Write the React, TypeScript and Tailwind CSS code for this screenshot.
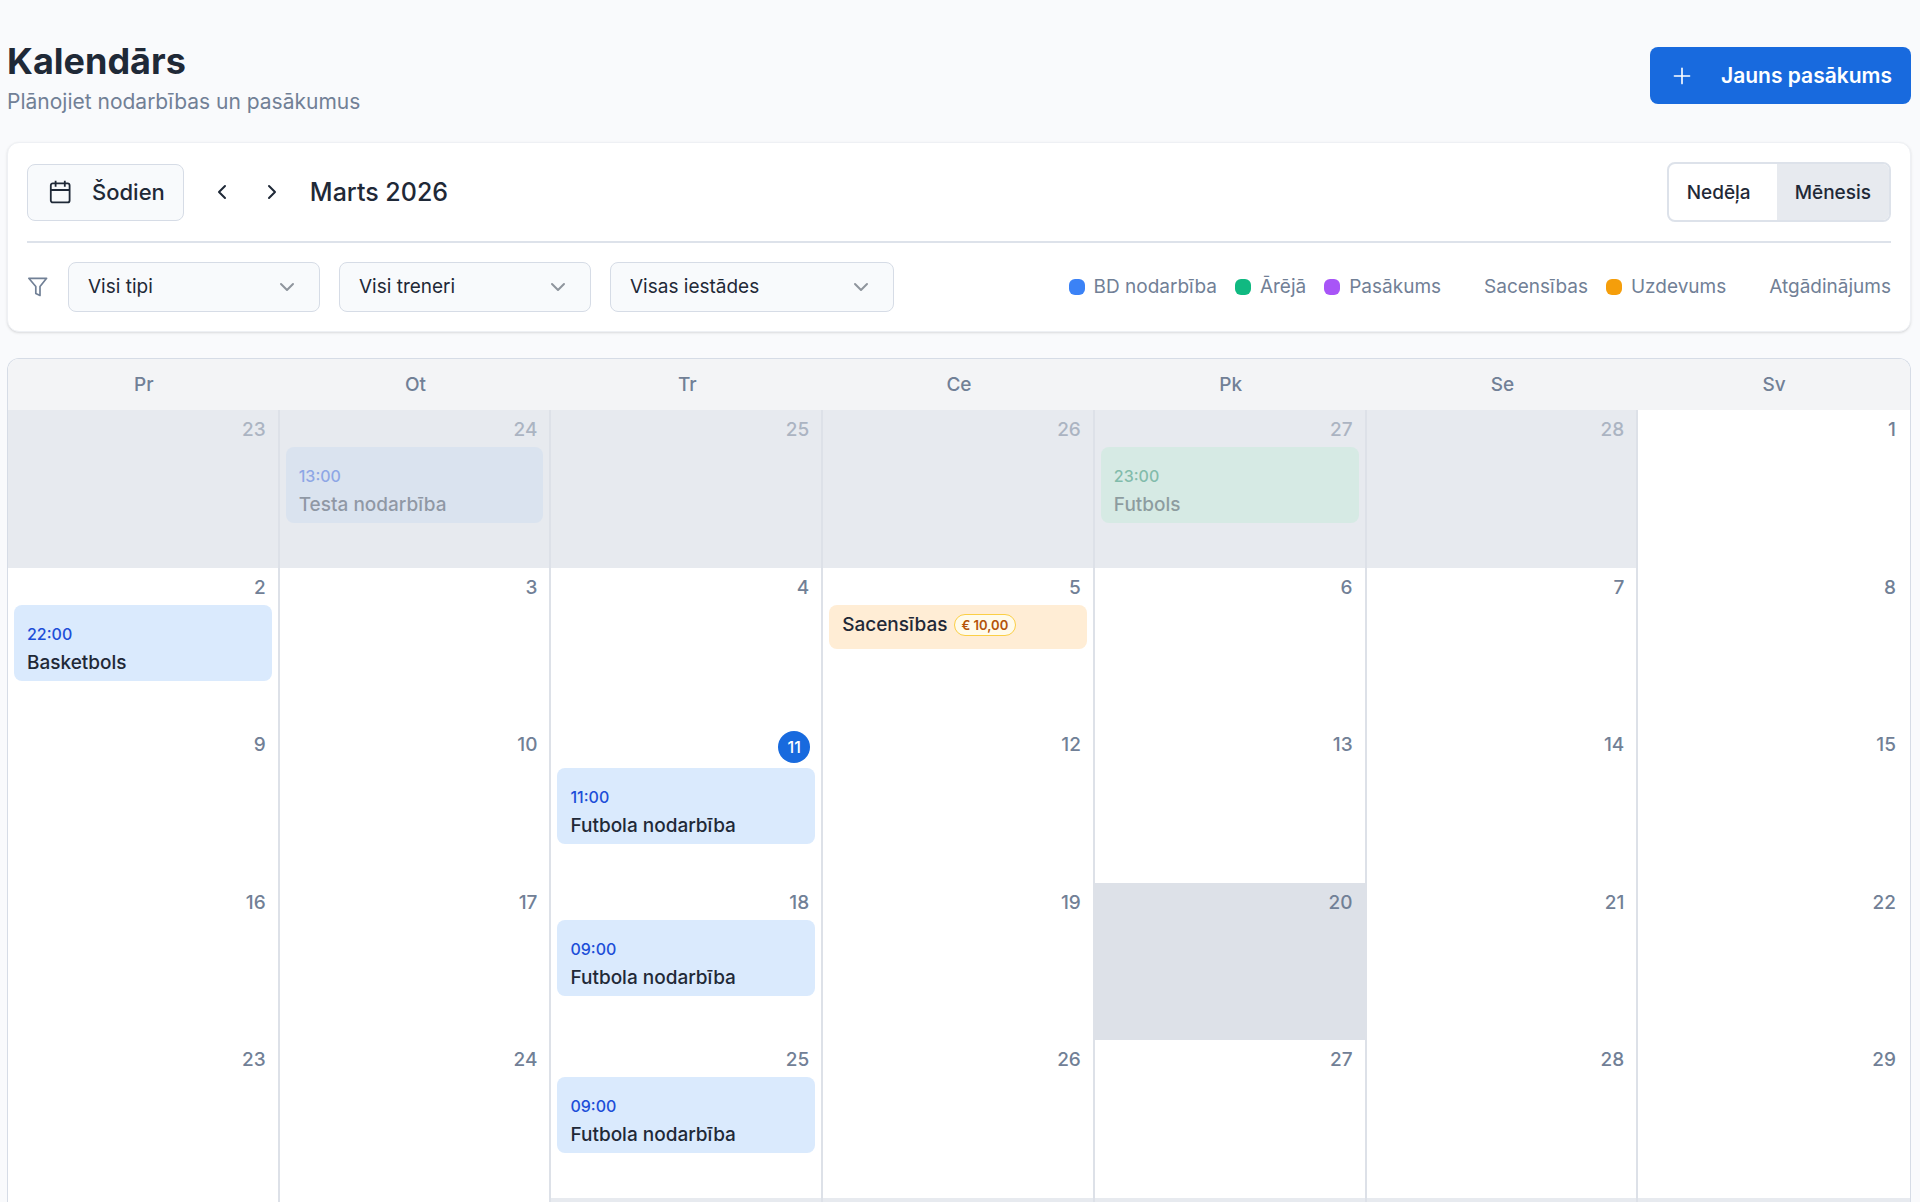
import { useState } from "react";
import clsx from "clsx";
import { ChevronDown, ChevronLeft, ChevronRight, Plus } from "lucide-react";

type CalendarEvent = {
  title: string;
  time?: string;
  price?: string;
  color: "blue" | "green" | "orange";
};

type Day = {
  id: string;
  day: number;
  outside?: boolean;
  today?: boolean;
  selected?: boolean;
  event?: CalendarEvent;
};

const weekdays = ["Pr", "Ot", "Tr", "Ce", "Pk", "Se", "Sv"];

const legend = [
  { label: "BD nodarbība", dot: "bg-[#3b82f6]" },
  { label: "Ārējā", dot: "bg-[#10b981]" },
  { label: "Pasākums", dot: "bg-[#a855f7]" },
  { label: "Sacensības", dot: "" },
  { label: "Uzdevums", dot: "bg-[#f59e0b]" },
  { label: "Atgādinājums", dot: "" },
];

const events: Record<string, CalendarEvent> = {
  "2-24": { time: "13:00", title: "Testa nodarbība", color: "blue" },
  "2-27": { time: "23:00", title: "Futbols", color: "green" },
  "3-2": { time: "22:00", title: "Basketbols", color: "blue" },
  "3-5": { title: "Sacensības", price: "€ 10,00", color: "orange" },
  "3-11": { time: "11:00", title: "Futbola nodarbība", color: "blue" },
  "3-18": { time: "09:00", title: "Futbola nodarbība", color: "blue" },
  "3-25": { time: "09:00", title: "Futbola nodarbība", color: "blue" },
};

// The grid starts on Monday, February 23
const days: Day[] = Array.from({ length: 42 }, (_, i) => {
  const date = new Date(2026, 1, 23 + i);
  const month = date.getMonth() + 1;
  const id = `${month}-${date.getDate()}`;
  return {
    id,
    day: date.getDate(),
    outside: month !== 3,
    today: id === "3-11",
    selected: id === "3-20",
    event: events[id],
  };
});

const eventStyles = {
  blue: { box: "bg-[#daeafd]", faded: "bg-[#dae3ef]", time: "text-[#1d4ed8]" },
  green: { box: "bg-[#d1fae5]", faded: "bg-[#d6eae4]", time: "text-[#047857]" },
  orange: { box: "bg-[#ffedd5]", faded: "bg-[#f3ebe2]", time: "text-[#c2410c]" },
};

const CalendarIcon = () => (
  <svg
    width="24"
    height="24"
    viewBox="0 0 24 24"
    fill="none"
    stroke="currentColor"
    strokeWidth="1.8"
    strokeLinejoin="round"
    aria-hidden="true"
  >
    <rect x="2.8" y="3.4" width="18.8" height="19" rx="2" />
    <path d="M2.8 10h18.8M7.6 .8v6M16.8 .8v6" />
  </svg>
);

const FilterIcon = () => (
  <svg
    width="22"
    height="22"
    viewBox="0 0 22 22"
    fill="none"
    stroke="currentColor"
    strokeWidth="1.7"
    strokeLinejoin="round"
    className="shrink-0 text-[#718096]"
    aria-hidden="true"
  >
    <path d="M1.8 2.3h17.8l-6.6 8.2v8.9l-4.2-2v-6.9z" />
  </svg>
);

const FilterSelect = ({
  label,
  value,
  className,
}: {
  label: string;
  value: string;
  className: string;
}) => (
  <div className={clsx("relative", className)}>
    <select
      aria-label={label}
      className="block h-[50px] w-full appearance-none rounded-lg border border-[#d6dce6] bg-[#f8fafc] pl-[19px] pr-12 text-[19px]"
    >
      <option>{value}</option>
    </select>
    <ChevronDown
      size={24}
      className="pointer-events-none absolute right-[21px] top-[13px] text-[#8f959d]"
    />
  </div>
);

const EventCard = ({
  event,
  faded,
}: {
  event: CalendarEvent;
  faded?: boolean;
}) => {
  const style = eventStyles[event.color];
  return (
    <button
      className={clsx(
        "mt-[3px] block w-full rounded-lg px-[13px] text-left",
        faded ? style.faded : style.box,
        event.time ? "pb-1 pt-[18px]" : "pb-2.5 pt-1.5"
      )}
    >
      {event.time && (
        <span
          className={clsx(
            "mb-1 block text-[16px] font-medium leading-[22px]",
            style.time,
            faded && "opacity-40"
          )}
        >
          {event.time}
        </span>
      )}
      <span
        className={clsx(
          "flex items-center gap-1.5 text-[19px] font-medium leading-7",
          faded && "opacity-40"
        )}
      >
        {event.title}
        {event.price && (
          <span className="rounded-full border border-[#fbcf45] bg-[#fffbeb] px-[7px] text-[13px] font-semibold leading-5 text-[#b45309]">
            {event.price}
          </span>
        )}
      </span>
    </button>
  );
};

const DayCell = ({
  day,
  last,
  collapsed,
}: {
  day: Day;
  last: boolean;
  collapsed: boolean;
}) => (
  <div
    className={clsx(
      "min-w-0 border-r-2",
      !collapsed && "px-1.5 pt-1.5",
      last ? "border-transparent" : "border-[#dde1e8]",
      day.outside && "bg-[#e7eaef]",
      day.selected && "bg-[#dde1e8]"
    )}
  >
    {!collapsed && (
      <>
        <div className="flex justify-end pr-[5px]">
          {day.today ? (
            <span className="mb-0.5 flex size-8 items-center justify-center rounded-full bg-[#186ade] text-[16px] font-medium text-white">
              {day.day}
            </span>
          ) : (
            <span
              className={clsx(
                "pr-px text-[19px] font-medium leading-7 text-[#718096]",
                day.outside && "opacity-50"
              )}
            >
              {day.day}
            </span>
          )}
        </div>
        {day.event && <EventCard event={day.event} faded={day.outside} />}
      </>
    )}
  </div>
);

export default function App() {
  const [view, setView] = useState("month");

  return (
    <main className="flex min-h-screen flex-col bg-[#f9fafc] pl-[7px] pr-[9px] pt-10 font-[Inter,sans-serif] text-[#1f2937]">
      <header className="flex items-start justify-between">
        <div>
          <h1 className="text-[36px] font-bold leading-[42px]">Kalendārs</h1>
          <p className="mt-1 text-[21px] leading-8 text-[#718096]">
            Plānojiet nodarbības un pasākumus
          </p>
        </div>
        <button className="mt-[7px] flex h-[57px] items-center gap-[26px] rounded-lg bg-[#186ade] px-[19px] text-[21px] font-semibold text-white">
          <Plus size={26} strokeWidth={1.5} />
          Jauns pasākums
        </button>
      </header>

      <section className="mt-6 rounded-xl border border-[#eef0f4] bg-white px-[19px] shadow-sm">
        <div className="flex h-[100px] items-center justify-between border-b-2 border-[#dde2ea]">
          <div className="flex items-center">
            <button className="flex h-[57px] items-center gap-5 rounded-lg border border-[#d6dce6] bg-[#f8fafc] pl-5 pr-[18px] text-[22px] font-medium">
              <CalendarIcon />
              Šodien
            </button>
            <button aria-label="Iepriekšējais" className="ml-[26px]">
              <ChevronLeft size={24} />
            </button>
            <button aria-label="Nākamais" className="ml-[26px]">
              <ChevronRight size={24} />
            </button>
            <h2 className="ml-[26px] pt-0.5 text-[25px] font-medium">
              Marts 2026
            </h2>
          </div>
          <div className="flex h-[60px] overflow-hidden rounded-lg border-2 border-[#dde2ea] text-[19px] font-medium">
            <button
              onClick={() => setView("week")}
              className={clsx(
                "pl-[18px] pr-[26px] pt-0.5",
                view === "week" && "bg-[#e7eaef]"
              )}
            >
              Nedēļa
            </button>
            <button
              onClick={() => setView("month")}
              className={clsx(
                "px-[18px] pt-0.5",
                view === "month" && "bg-[#e7eaef]"
              )}
            >
              Mēnesis
            </button>
          </div>
        </div>

        <div className="flex h-[88px] items-center justify-between">
          <div className="flex items-center gap-[19px]">
            <FilterIcon />
            <FilterSelect label="Tips" value="Visi tipi" className="w-[252px]" />
            <FilterSelect
              label="Treneris"
              value="Visi treneri"
              className="w-[252px]"
            />
            <FilterSelect
              label="Iestāde"
              value="Visas iestādes"
              className="w-[284px]"
            />
          </div>
          <ul className="flex gap-[18px] text-[19px] text-[#718096]">
            {legend.map((item) => (
              <li key={item.label} className="flex items-center gap-[9px]">
                <span className={clsx("size-4 rounded-md", item.dot)} />
                {item.label}
              </li>
            ))}
          </ul>
        </div>
      </section>

      <section className="mt-[26px] flex grow flex-col overflow-hidden rounded-t-xl border border-b-0 border-[#d6dce6] bg-white">
        <div className="grid h-[51px] grid-cols-7 items-center bg-[#f3f4f6] pt-0.5 text-center text-[19px] font-medium text-[#718096]">
          {weekdays.map((name) => (
            <div key={name}>{name}</div>
          ))}
        </div>
        {/* the sixth week stays collapsed to a thin strip */}
        <div className="grid grow grid-cols-7 grid-rows-[repeat(5,35fr)_1fr]">
          {days.map((day, i) => (
            <DayCell
              key={day.id}
              day={day}
              last={i % 7 === 6}
              collapsed={i >= 35}
            />
          ))}
        </div>
      </section>
    </main>
  );
}
